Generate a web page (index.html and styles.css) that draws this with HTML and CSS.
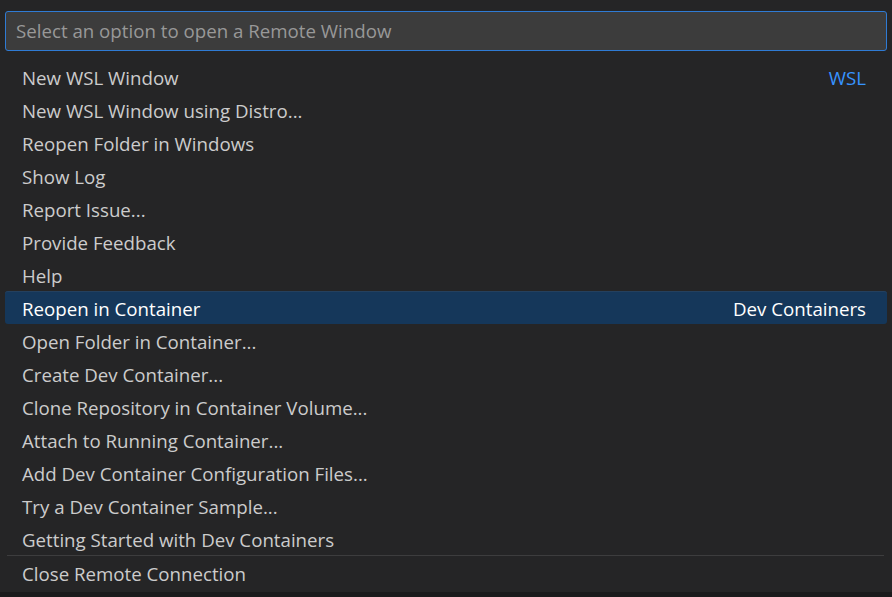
FILE: index.html
```html
<!DOCTYPE html>
<html>
<head>
<meta charset="utf-8">
<link rel="stylesheet" href="styles.css">
</head>
<body>
<div class="picker">
  <div class="input">Select an option to open a Remote Window</div>
  <div class="list">
    <div class="row"><span class="label">New WSL Window</span><span class="group">WSL</span></div>
    <div class="row"><span class="label">New WSL Window using Distro...</span></div>
    <div class="row"><span class="label">Reopen Folder in Windows</span></div>
    <div class="row"><span class="label">Show Log</span></div>
    <div class="row"><span class="label">Report Issue...</span></div>
    <div class="row"><span class="label">Provide Feedback</span></div>
    <div class="row"><span class="label">Help</span></div>
    <div class="row selected"><span class="label">Reopen in Container</span><span class="group">Dev Containers</span></div>
    <div class="row"><span class="label">Open Folder in Container...</span></div>
    <div class="row"><span class="label">Create Dev Container...</span></div>
    <div class="row"><span class="label">Clone Repository in Container Volume...</span></div>
    <div class="row"><span class="label">Attach to Running Container...</span></div>
    <div class="row"><span class="label">Add Dev Container Configuration Files...</span></div>
    <div class="row"><span class="label">Try a Dev Container Sample...</span></div>
    <div class="row"><span class="label">Getting Started with Dev Containers</span></div>
    <div class="separator"></div>
    <div class="row"><span class="label">Close Remote Connection</span></div>
  </div>
</div>
<div class="footer"></div>
</body>
</html>
```
FILE: styles.css
```css
html, body {
  margin: 0;
  padding: 0;
}
body {
  background: #252526;
  font-family: "Open Sans", "Noto Sans", sans-serif;
  font-size: 18.7px;
  color: #cccccc;
  height: 597px;
  display: flex;
  flex-direction: column;
  overflow: hidden;
}
.picker {
  padding: 11px 5px 0 5px;
  flex: none;
  display: flex;
  flex-direction: column;
}
.input {
  flex: none;
  height: 40px;
  box-sizing: border-box;
  border: 1px solid #2f7bd4;
  border-radius: 3px;
  background: #3c3c3c;
  color: #989898;
  padding: 0 0 1px 10px;
  display: flex;
  align-items: center;
}
.list {
  margin-top: 9px;
  display: flex;
  flex-direction: column;
}
.row {
  flex: none;
  height: 33px;
  display: flex;
  align-items: center;
  justify-content: space-between;
  padding: 1px 21px 0 17px;
  box-sizing: border-box;
  border-radius: 3px;
  white-space: nowrap;
}
.group {
  color: #3794ff;
}
.selected {
  background: #15375a;
  color: #ffffff;
  box-shadow: inset 0 1px 0 #24405e;
}
.selected .group {
  color: #ffffff;
}
.separator {
  flex: none;
  height: 1px;
  margin: 0 3px 0 2px;
  background: #3d3d3e;
}
.footer {
  margin-top: 3px;
  flex: 1;
  background: #1b1b1c;
}
```
